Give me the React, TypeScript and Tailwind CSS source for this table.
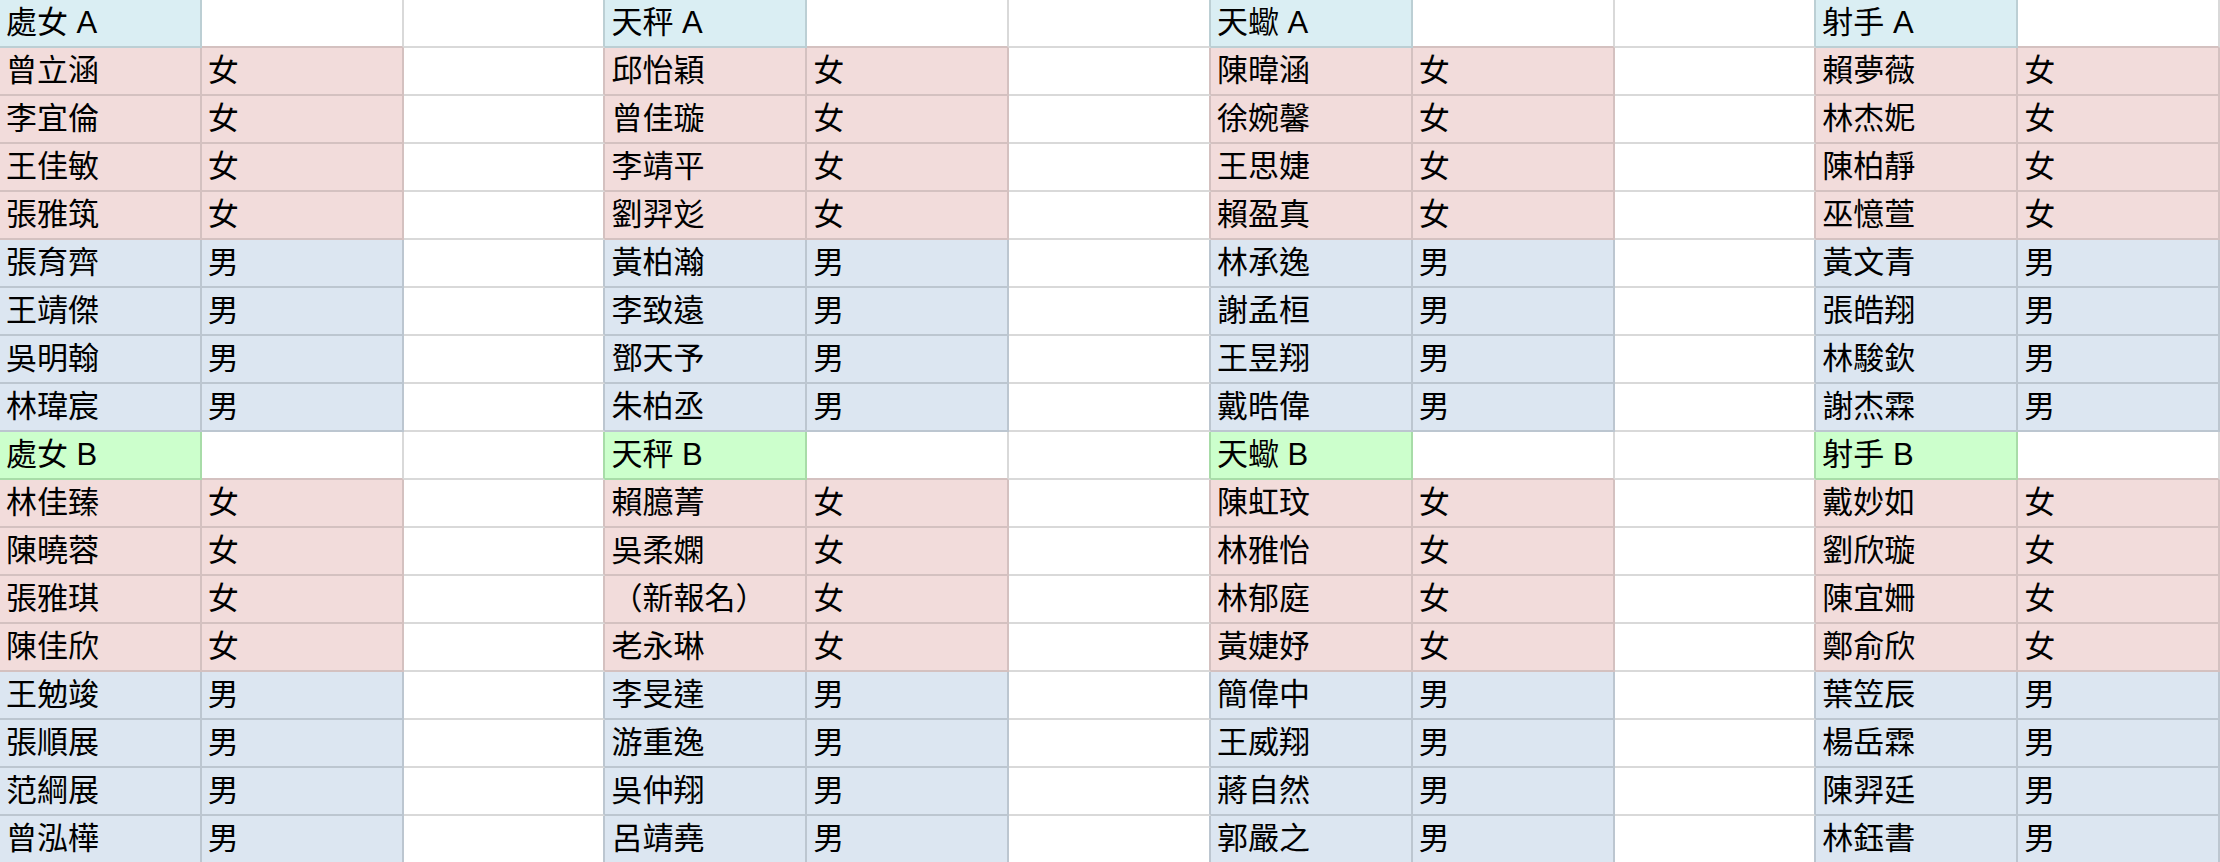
import React from "react";

type Tone = "white" | "cyan" | "pink" | "blue" | "green";

const bg: Record<Tone, string> = {
  white: "bg-white",
  cyan: "bg-[#daeef3]",
  pink: "bg-[#f2dcdb]",
  blue: "bg-[#dce6f1]",
  green: "bg-[#ccffcc]",
};

const rightBorder: Record<Tone, string> = {
  white: "border-r-[#d9d9d9]",
  cyan: "border-r-[#bccfd4]",
  pink: "border-r-[#d4c1c0]",
  blue: "border-r-[#bcc6d0]",
  green: "border-r-[#a8dca8]",
};

const bottomBorder: Record<Tone, string> = {
  white: "border-b-[#d9d9d9]",
  cyan: "border-b-[#bccfd4]",
  pink: "border-b-[#d4c1c0]",
  blue: "border-b-[#bcc6d0]",
  green: "border-b-[#a8dca8]",
};

type Group = {
  a: string;
  b: string;
  aF: string[];
  aM: string[];
  bF: string[];
  bM: string[];
};

const groups: Group[] = [
  {
    a: "處女 A",
    b: "處女 B",
    aF: ["曾立涵", "李宜倫", "王佳敏", "張雅筑"],
    aM: ["張育齊", "王靖傑", "吳明翰", "林瑋宸"],
    bF: ["林佳臻", "陳曉蓉", "張雅琪", "陳佳欣"],
    bM: ["王勉竣", "張順展", "范綱展", "曾泓樺"],
  },
  {
    a: "天秤 A",
    b: "天秤 B",
    aF: ["邱怡穎", "曾佳璇", "李靖平", "劉羿彣"],
    aM: ["黃柏瀚", "李致遠", "鄧天予", "朱柏丞"],
    bF: ["賴臆菁", "吳柔嫻", "（新報名）", "老永琳"],
    bM: ["李旻達", "游重逸", "吳仲翔", "呂靖堯"],
  },
  {
    a: "天蠍 A",
    b: "天蠍 B",
    aF: ["陳暐涵", "徐婉馨", "王思婕", "賴盈真"],
    aM: ["林承逸", "謝孟桓", "王昱翔", "戴晧偉"],
    bF: ["陳虹玟", "林雅怡", "林郁庭", "黃婕妤"],
    bM: ["簡偉中", "王威翔", "蔣自然", "郭嚴之"],
  },
  {
    a: "射手 A",
    b: "射手 B",
    aF: ["賴夢薇", "林杰妮", "陳柏靜", "巫憶萱"],
    aM: ["黃文青", "張皓翔", "林駿欽", "謝杰霖"],
    bF: ["戴妙如", "劉欣璇", "陳宜姍", "鄭俞欣"],
    bM: ["葉笠辰", "楊岳霖", "陳羿廷", "林鈺書"],
  },
];

type Cell = { text: string; tone: Tone };

function buildGrid(): Cell[][] {
  const rows: Cell[][] = [];
  for (let r = 0; r < 18; r++) {
    const row: Cell[] = [];
    groups.forEach((g, gi) => {
      let name: Cell;
      let gender: Cell;
      if (r === 0) {
        name = { text: g.a, tone: "cyan" };
        gender = { text: "", tone: "white" };
      } else if (r === 9) {
        name = { text: g.b, tone: "green" };
        gender = { text: "", tone: "white" };
      } else {
        const block = r < 9 ? r - 1 : r - 10;
        const isA = r < 9;
        const female = block < 4;
        const list = isA ? (female ? g.aF : g.aM) : female ? g.bF : g.bM;
        const tone: Tone = female ? "pink" : "blue";
        name = { text: list[block % 4], tone };
        gender = { text: female ? "女" : "男", tone };
      }
      row.push(name, gender);
      if (gi < 3) row.push({ text: "", tone: "white" });
    });
    rows.push(row);
  }
  return rows;
}

const grid = buildGrid();

export default function App() {
  return (
    <div
      className="w-[2220px] h-[862px] overflow-hidden bg-white text-black"
      style={{ fontFamily: '"Liberation Sans", "Noto Sans CJK TC", sans-serif' }}
    >
      <div className="grid grid-cols-11 w-[2220px]">
        {grid.map((row, r) =>
          row.map((cell, c) => {
            const right = row[c + 1];
            const below = grid[r + 1]?.[c];
            const rTone: Tone =
              cell.tone !== "white" ? cell.tone : right && right.tone !== "white" ? right.tone : "white";
            const bTone: Tone =
              cell.tone !== "white" ? cell.tone : below && below.tone !== "white" ? below.tone : "white";
            return (
              <div
                key={`${r}-${c}`}
                className={`h-[48px] border-r-2 border-b-2 px-[6px] text-[31px] leading-[46px] whitespace-nowrap overflow-hidden ${bg[cell.tone]} ${rightBorder[rTone]} ${bottomBorder[bTone]}`}
              >
                {cell.text}
              </div>
            );
          })
        )}
      </div>
    </div>
  );
}
